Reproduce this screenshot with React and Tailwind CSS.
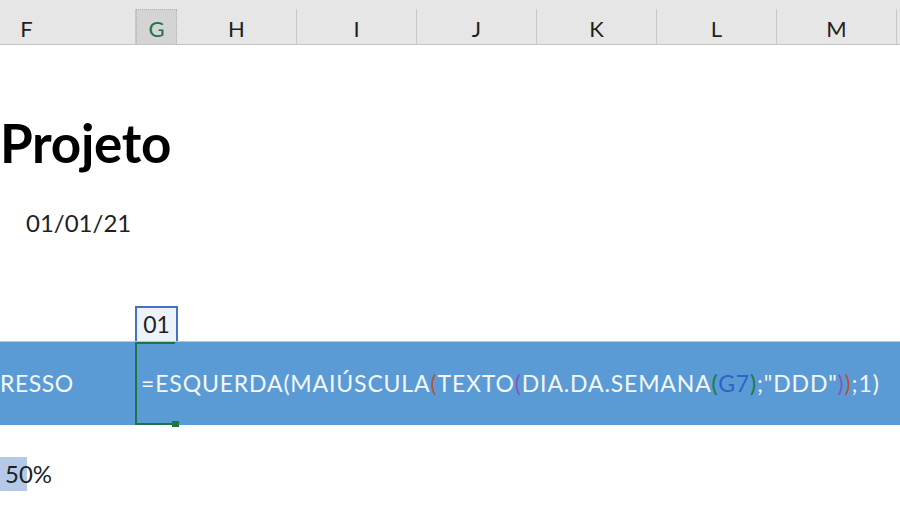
import React from 'react'

const FONT = "font-['Lato','Noto_Sans',sans-serif]"

// cabeçalho das colunas
const COLUMNS = [
  { label: 'F', width: 'w-[218px]' },
  { label: 'G', width: 'w-[41px]', active: true },
  { label: 'H', width: 'w-[120px]' },
  { label: 'I', width: 'w-[120px]' },
  { label: 'J', width: 'w-[120px]' },
  { label: 'K', width: 'w-[120px]' },
  { label: 'L', width: 'w-[120px]' },
  { label: 'M', width: 'w-[120px]' },
]

function ColumnHeader() {
  return (
    <div className="h-[45px] bg-[#e6e6e6] border-b border-[#c4c4c4] flex items-end ml-[-82px]">
      {COLUMNS.map((col) =>
        col.active ? (
          <div
            key={col.label}
            className={`${col.width} flex-none h-[35px] bg-[#d4d4d4] flex flex-col`}
          >
            <div className="flex-1 border-x border-t border-dotted border-[#b0b0b0] flex items-center justify-center pt-[2px] text-[22px] text-[#217346]">
              {col.label}
            </div>
            <div className="h-[3px] bg-[#217346]" />
          </div>
        ) : (
          <div
            key={col.label}
            className={`${col.width} flex-none h-[35px] border-r border-[#c8c8c8] flex items-center justify-center pt-[4px] text-[22px] text-[#1f1f1f]`}
          >
            {col.label}
          </div>
        )
      )}
      <div className="flex-1 h-[35px]" />
    </div>
  )
}

function Formula() {
  return (
    <span className="whitespace-nowrap tracking-[0.85px]">
      =ESQUERDA(MAIÚSCULA
      <span className="text-[#b5533f]">(</span>
      TEXTO
      <span className="text-[#8457b8]">(</span>
      DIA.DA.SEMANA
      <span className="text-[#1e7a3e]">(</span>
      <span className="text-[#2f62c8]">G7</span>
      <span className="text-[#1e7a3e]">)</span>
      ;"DDD"
      <span className="text-[#8457b8]">)</span>
      <span className="text-[#b5533f]">)</span>
      ;1)
    </span>
  )
}

export default function App() {
  return (
    <div className={`w-[900px] h-[507px] bg-white overflow-hidden ${FONT}`}>
      <ColumnHeader />

      <div className="h-[60px]" />

      {/* título */}
      <div className="h-[75px] flex items-center">
        <span className="text-[53px] font-bold text-black leading-none tracking-[-0.3px]">Projeto</span>
      </div>

      {/* data */}
      <div className="h-[85px] flex items-center pl-[26px]">
        <span className="text-[24px] text-[#1f1f1f] leading-none">01/01/21</span>
      </div>

      <div className="h-[41px]" />

      {/* célula de referência */}
      <div className="h-[35px] flex">
        <div className="w-[135px] flex-none" />
        <div className="w-[43px] flex-none border-2 border-b-0 border-[#4472c4] bg-[#eef3fa] flex items-center justify-center text-[23px] text-[#1f1f1f]">
          01
        </div>
      </div>

      {/* faixa com a fórmula */}
      <div className="h-[84px] bg-[#5b9bd5] border-t border-[#a9c9ea] flex text-[23px] text-[#f4f7fb]">
        <div className="w-[135px] flex-none flex items-center tracking-[0.5px]">RESSO</div>
        <div className="relative w-[40px] flex-none border-2 border-r-0 border-[#217346] flex items-center pl-[4px] overflow-visible">
          <Formula />
          <div className="absolute right-[-4px] bottom-[-4px] w-[7px] h-[6px] bg-[#217346]" />
        </div>
      </div>

      <div className="h-[32px]" />

      {/* progresso */}
      <div className="h-[34px] flex items-center relative">
        <div className="absolute left-0 top-0 w-[27px] h-full bg-[#b4c9e8]" />
        <span className="relative pl-[5px] text-[24px] text-[#1f1f1f] leading-none">50%</span>
      </div>
    </div>
  )
}
